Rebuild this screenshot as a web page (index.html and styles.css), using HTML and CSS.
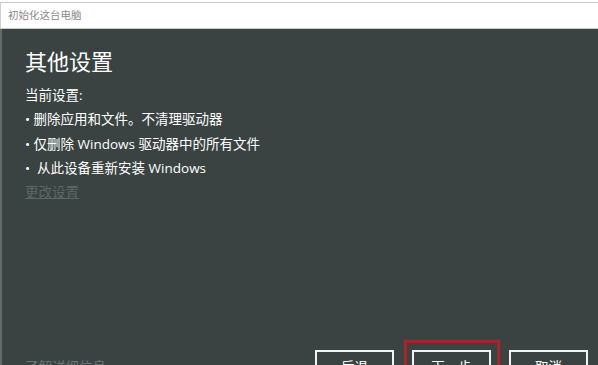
FILE: index.html
```html
<!DOCTYPE html>
<html lang="zh-CN">
<head>
<meta charset="utf-8">
<title>初始化这台电脑</title>
<link rel="stylesheet" href="styles.css">
</head>
<body>
<div class="window">
  <div class="titlebar">初始化这台电脑</div>
  <div class="pane">
    <h1 class="heading">其他设置</h1>
    <div class="settings">
      <p class="line">当前设置:</p>
      <p class="line">• 删除应用和文件。不清理驱动器</p>
      <p class="line">• 仅删除 Windows 驱动器中的所有文件</p>
      <p class="line">•&nbsp; 从此设备重新安装 Windows</p>
      <p class="line"><a class="change">更改设置</a></p>
    </div>
    <div class="footer">
      <a class="more">了解详细信息</a>
      <div class="buttons">
        <button class="btn">后退</button>
        <div class="highlight-wrap">
          <button class="btn">下一步</button>
          <span class="highlight"></span>
        </div>
        <button class="btn">取消</button>
      </div>
    </div>
  </div>
</div>
</body>
</html>
```
FILE: styles.css
```css
html, body {
  margin: 0;
  padding: 0;
  background: #ffffff;
  overflow: hidden;
  height: 365px;
}
body {
  font-family: "Open Sans", "Noto Sans CJK SC", sans-serif;
}
.window {
  margin-top: 2px;
  border-top: 1px solid #c9c9c9;
}
.titlebar {
  height: 25px;
  line-height: 25px;
  padding-left: 7px;
  border-left: 1px solid #d0d0d0;
  border-bottom: 1px solid #c9c9c9;
  font-size: 10.5px;
  color: #8a8a8a;
  background: #ffffff;
}
.pane {
  height: 360px;
  box-sizing: border-box;
  background: #3a4342;
  border-left: 2px solid #646a69;
  padding: 17px 10px 7px 23px;
  display: flex;
  flex-direction: column;
  color: #ffffff;
}
.heading {
  margin: 0;
  font-size: 22px;
  line-height: 30px;
  font-weight: 400;
}
.settings {
  margin-top: 7px;
}
.line {
  margin: 0;
  font-size: 13.5px;
  line-height: 24.3px;
  white-space: pre;
}
.change {
  color: #5c6866;
  text-decoration: underline;
}
.footer {
  margin-top: auto;
  display: flex;
  align-items: center;
  justify-content: space-between;
}
.more {
  color: #6b7776;
  font-size: 13.5px;
}
.buttons {
  display: flex;
  gap: 18px;
}
.btn {
  width: 79px;
  height: 32px;
  box-sizing: border-box;
  border: 2px solid #f2f2f2;
  background: #3a4342;
  color: #ffffff;
  font-family: "Open Sans", "Noto Sans CJK SC", sans-serif;
  font-size: 13.5px;
  padding: 0;
}
.highlight-wrap {
  position: relative;
}
.highlight {
  position: absolute;
  top: -10px;
  left: -8px;
  right: -9px;
  bottom: -10px;
  border: 3px solid #a1262a;
  box-shadow: 0 0 2px rgba(180, 40, 40, 0.6);
  pointer-events: none;
}
```
